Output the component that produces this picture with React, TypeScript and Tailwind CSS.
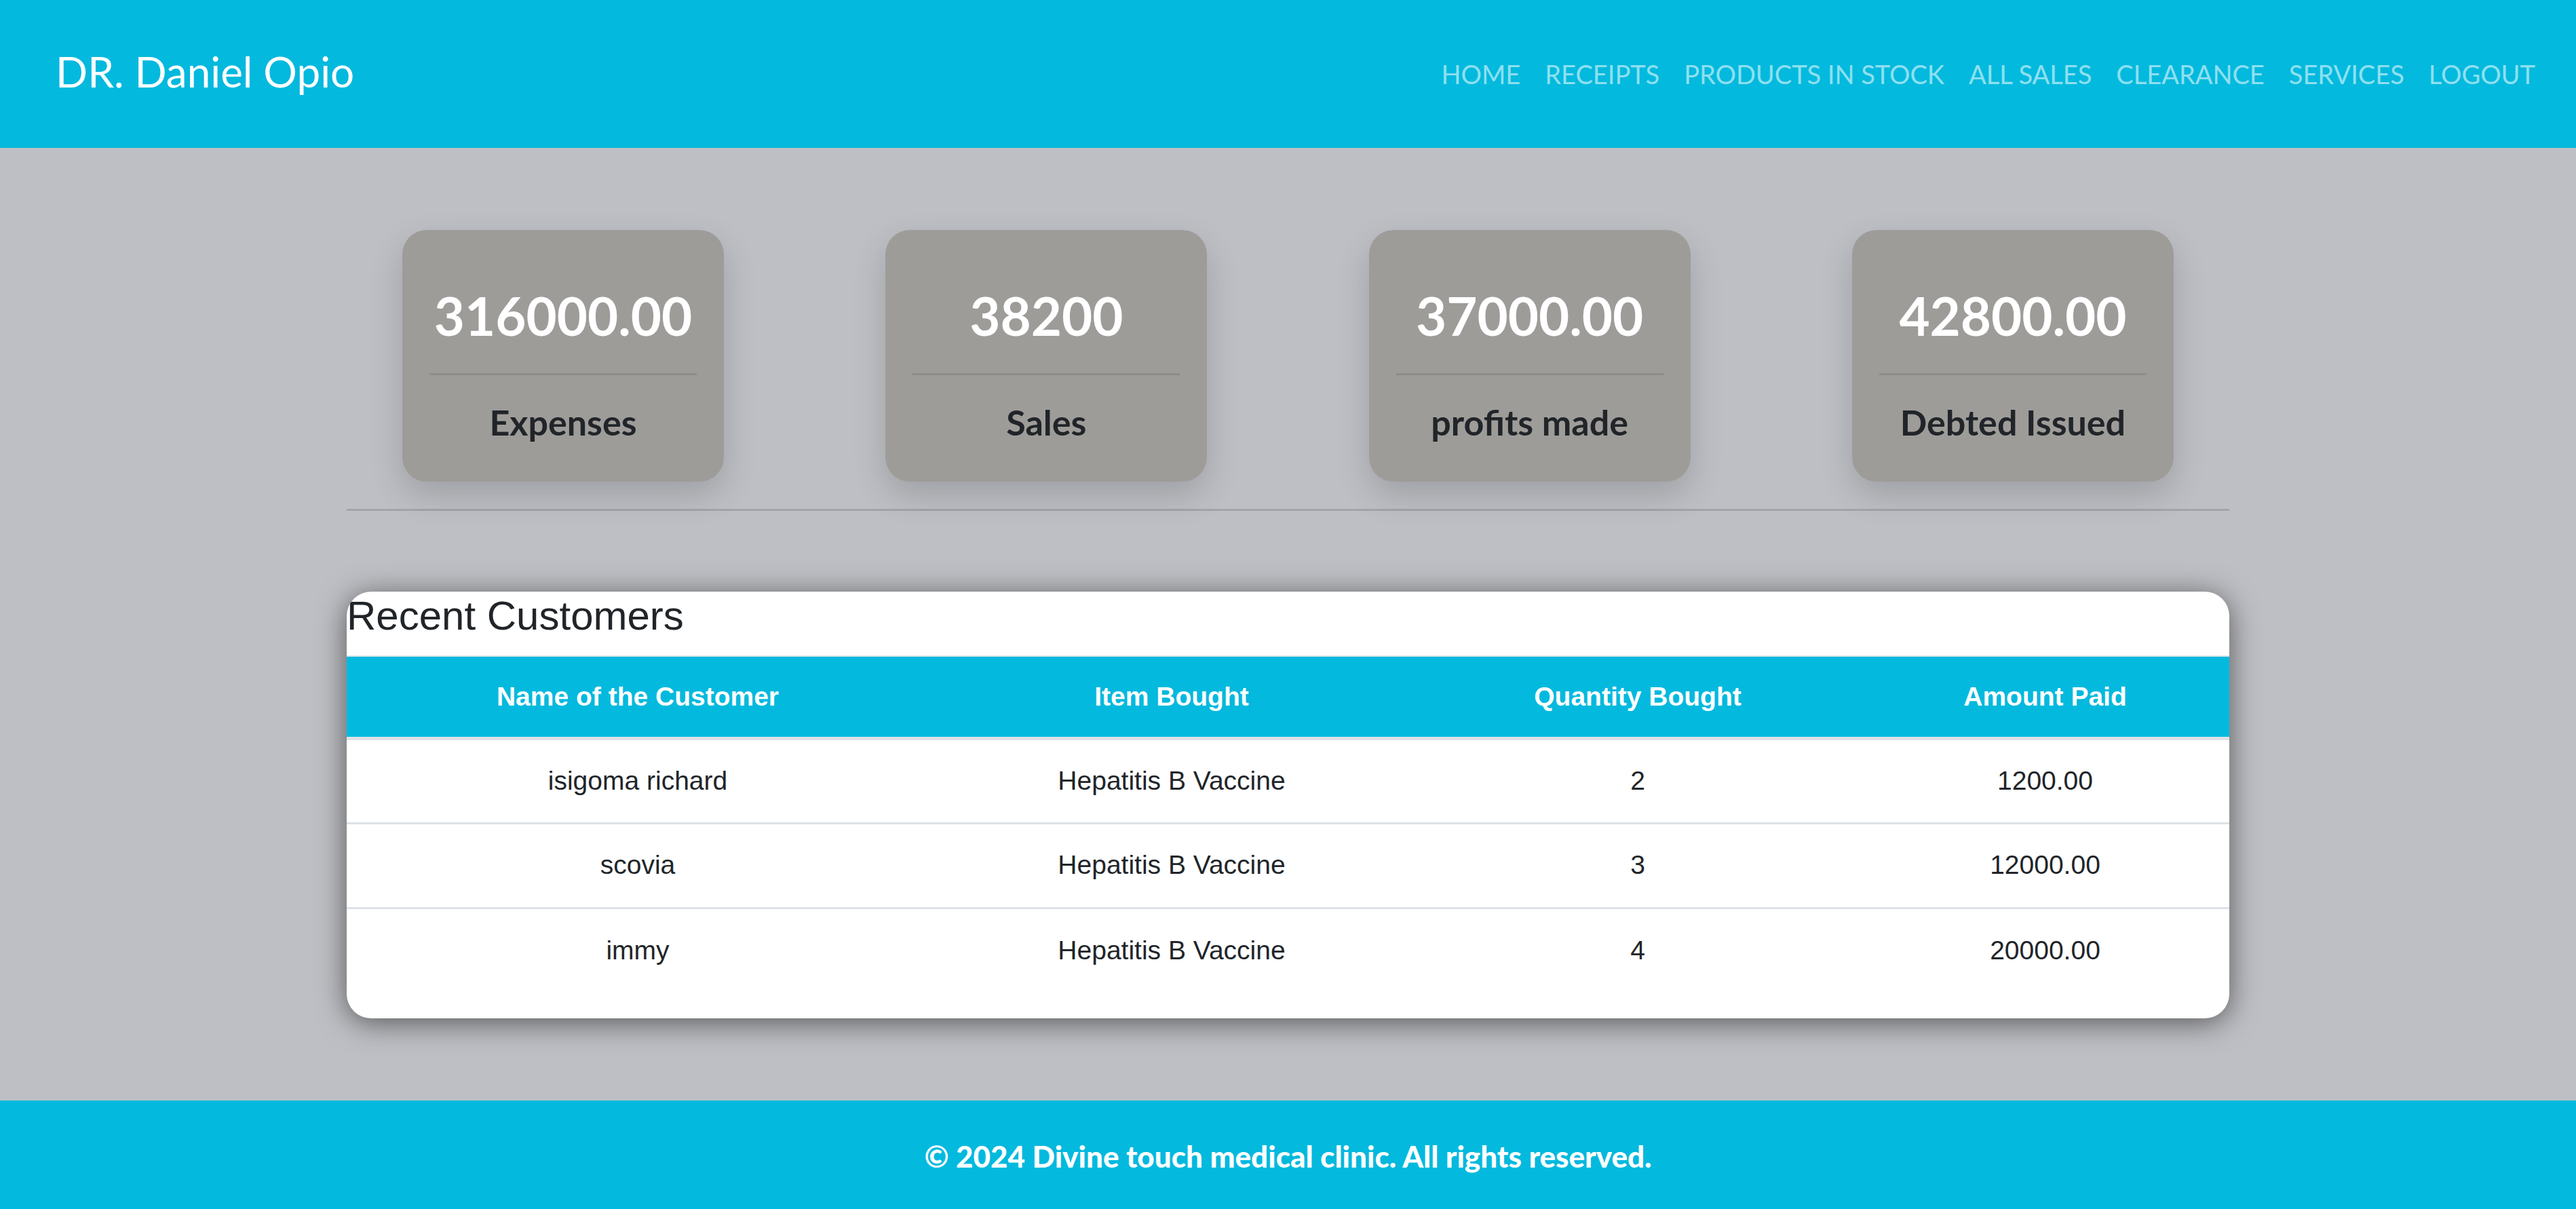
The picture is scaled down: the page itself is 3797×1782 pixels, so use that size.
import React from 'react';

const stats = [
  { value: '316000.00', label: 'Expenses' },
  { value: '38200', label: 'Sales' },
  { value: '37000.00', label: 'profits made' },
  { value: '42800.00', label: 'Debted Issued' },
];

const links = ['HOME', 'RECEIPTS', 'PRODUCTS IN STOCK', 'ALL SALES', 'CLEARANCE', 'SERVICES', 'LOGOUT'];

const customers = [
  { name: 'isigoma richard', item: 'Hepatitis B Vaccine', qty: '2', paid: '1200.00' },
  { name: 'scovia', item: 'Hepatitis B Vaccine', qty: '3', paid: '12000.00' },
  { name: 'immy', item: 'Hepatitis B Vaccine', qty: '4', paid: '20000.00' },
];

export default function App() {
  return (
    <div className="min-h-screen flex flex-col bg-[#bebfc4] font-['Lato',sans-serif]">
      {/* Navbar */}
      <header className="h-[218px] bg-[#03b9de] flex items-center justify-between pl-[82px] pr-[42px]">
        <span className="text-white text-[62px] leading-none pb-[8px]">DR. Daniel Opio</span>
        <nav className="flex items-center">
          {links.map(l => (
            <a key={l} href="#" className="px-[18px] text-[38px] text-white/55 leading-none">
              {l}
            </a>
          ))}
        </nav>
      </header>

      <main className="flex-1 flex flex-col items-center">
        <div className="w-[2775px]">
          {/* Stat cards */}
          <div className="flex justify-between px-[82px] pt-[121px] pb-[40px]">
            {stats.map(s => (
              <div
                key={s.label}
                className="w-[474px] h-[371px] rounded-[36px] bg-[#9e9c99] shadow-[0_20px_50px_rgba(0,0,0,0.16)] flex flex-col items-center pt-[80px] px-[40px]"
              >
                <div className="text-white font-bold text-[78px] leading-[1.2]">{s.value}</div>
                <div className="w-full h-[3px] bg-[#8e8c8a] mt-[37px]" />
                <div className="text-[#212529] font-bold text-[52px] leading-[1.2] mt-[38px]">{s.label}</div>
              </div>
            ))}
          </div>

          <div className="h-[3px] bg-[#a3a3a9]" />

          {/* Recent customers */}
          <div className="mt-[119px] bg-white rounded-[36px] shadow-[0_6px_44px_rgba(0,0,0,0.55)] pb-[38px] overflow-hidden font-['Liberation_Sans',Arial,sans-serif]">
            <h4 className="text-[60px] leading-[1.2] text-[#212529]">Recent Customers</h4>
            <table className="w-full mt-[22px] border-collapse text-center">
              <colgroup>
                <col className="w-[858px]" />
                <col className="w-[716px]" />
                <col className="w-[658px]" />
                <col className="w-[543px]" />
              </colgroup>
              <thead>
                <tr className="bg-[#03b9de] border-t-[2px] border-b-[5px] border-[#dee2e6]">
                  <th className="h-[121px] text-white font-bold text-[39px]">Name of the Customer</th>
                  <th className="h-[121px] text-white font-bold text-[39px]">Item Bought</th>
                  <th className="h-[121px] text-white font-bold text-[39px]">Quantity Bought</th>
                  <th className="h-[121px] text-white font-bold text-[39px]">Amount Paid</th>
                </tr>
              </thead>
              <tbody className="text-[39px] text-[#212529]">
                {customers.map((c, i) => (
                  <tr key={c.name} className={i < customers.length - 1 ? 'border-b-[3px] border-[#dee2e6]' : ''}>
                    <td className="h-[125px]">{c.name}</td>
                    <td className="h-[125px]">{c.item}</td>
                    <td className="h-[125px]">{c.qty}</td>
                    <td className="h-[125px]">{c.paid}</td>
                  </tr>
                ))}
              </tbody>
            </table>
          </div>
        </div>
      </main>

      <footer className="h-[160px] mt-[121px] bg-[#03b9de] flex items-center justify-center pt-[4px]">
        <p className="text-white font-black text-[44px]">© 2024 Divine touch medical clinic. All rights reserved.</p>
      </footer>
    </div>
  );
}
